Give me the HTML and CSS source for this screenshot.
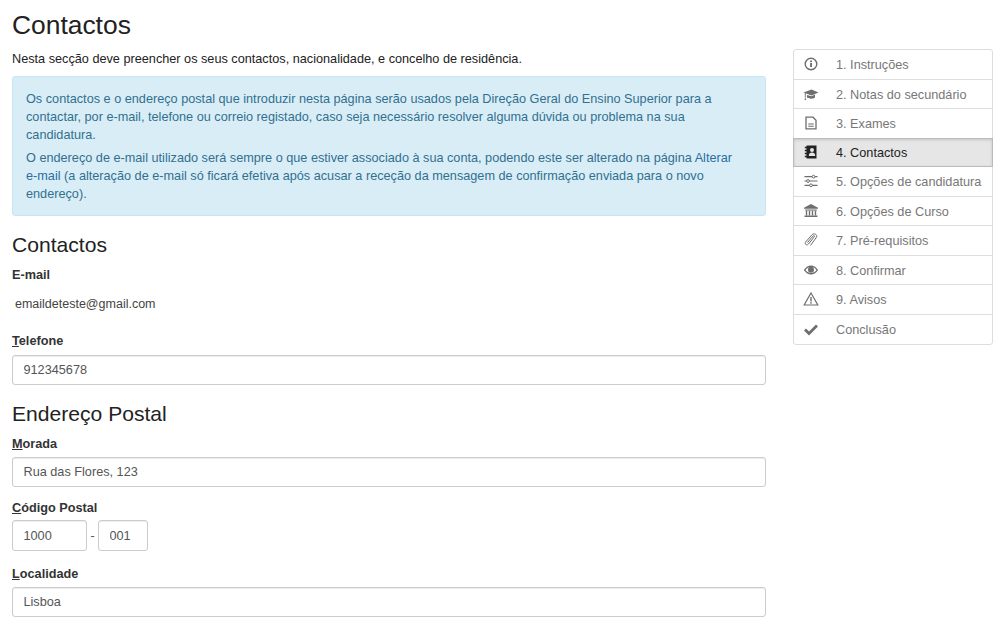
FILE: index.html
```html
<!DOCTYPE html>
<html lang="pt">
<head>
<meta charset="utf-8">
<title>Contactos</title>
<link rel="stylesheet" href="styles.css">
</head>
<body>
<div class="page">
  <main class="main">
    <h1 class="title">Contactos</h1>
    <p class="lead">Nesta secção deve preencher os seus contactos, nacionalidade, e concelho de residência.</p>
    <div class="alert">
      <p class="alert-p">Os contactos e o endereço postal que introduzir nesta página serão usados pela Direção Geral do Ensino Superior para a contactar, por e-mail, telefone ou correio registado, caso seja necessário resolver alguma dúvida ou problema na sua candidatura.</p>
      <p class="alert-p">O endereço de e-mail utilizado será sempre o que estiver associado à sua conta, podendo este ser alterado na página <a class="alert-link" href="#">Alterar <span class="nowrap">e-mail</span></a> (a alteração de e-mail só ficará efetiva após acusar a receção da mensagem de confirmação enviada para o novo endereço).</p>
    </div>
    <h2 class="section first">Contactos</h2>
    <div class="label email-label">E-mail</div>
    <div class="static">emaildeteste@gmail.com</div>
    <label class="label tel-label" for="tel"><u>T</u>elefone</label>
    <input class="field" id="tel" value="912345678">
    <h2 class="section second">Endereço Postal</h2>
    <label class="label mor-label" for="mor"><u>M</u>orada</label>
    <input class="field" id="mor" value="Rua das Flores, 123">
    <label class="label gap" for="cp"><u>C</u>ódigo Postal</label>
    <div class="postal">
      <input class="field cp4" id="cp" value="1000">
      <span class="dash">-</span>
      <input class="field cp3" value="001">
    </div>
    <label class="label gap2" for="loc"><u>L</u>ocalidade</label>
    <input class="field" id="loc" value="Lisboa">
  </main>
  <nav class="steps">
    <a class="step" href="#"><svg class="ico" viewBox="0 0 16 16"><circle cx="8" cy="8" r="5.8" fill="none" stroke="currentColor" stroke-width="1.4"/><rect x="7.1" y="7" width="1.9" height="4" fill="currentColor"/><rect x="7.1" y="4.5" width="1.9" height="1.6" fill="currentColor"/></svg><span>1. Instruções</span></a>
    <a class="step" href="#"><svg class="ico" viewBox="0 0 16 16"><path d="M0.5 6.5 8.5 3.5 15.5 6.5 8.5 9.5Z" fill="currentColor"/><path d="M4 9v2.5c2 1.6 6 1.6 8 0V8.5L8.5 10.3Z" fill="currentColor"/><path d="M2.3 7v4.5" stroke="currentColor" stroke-width=".9"/><path d="M1.5 14l.8-3 .8 3Z" fill="currentColor"/></svg><span>2. Notas do secundário</span></a>
    <a class="step" href="#"><svg class="ico" viewBox="0 0 16 16"><path d="M3 2.200h7l3 3v8.600H3Z" fill="none" stroke="currentColor" stroke-width="1.3"/><path d="M5.200 9h5.600M5.200 11.200h5.600" stroke="currentColor" stroke-width="1.1"/></svg><span>3. Exames</span></a>
    <a class="step active" href="#"><svg class="ico" viewBox="0 0 16 16"><path d="M3.500 1.500h10v13h-10Z" fill="currentColor"/><path d="M1.800 3.500h2.500M1.800 6.500h2.500M1.800 9.500h2.500M1.800 12.500h2.500" stroke="currentColor" stroke-width="1.4"/><circle cx="9" cy="6" r="2" fill="#e6e6e6"/><path d="M5.800 12c0-2.600 1.400-3.400 3.200-3.400s3.200.8 3.200 3.400Z" fill="#e6e6e6"/></svg><span>4. Contactos</span></a>
    <a class="step" href="#"><svg class="ico" viewBox="0 0 16 16"><path d="M1.500 3.700h13M1.500 8h13M1.500 12.300h13" stroke="currentColor" stroke-width="1.2"/><circle cx="10.500" cy="3.700" r="1.400" fill="#fff" stroke="currentColor"/><circle cx="5" cy="8" r="1.400" fill="#fff" stroke="currentColor"/><circle cx="8" cy="12.300" r="1.400" fill="#fff" stroke="currentColor"/></svg><span>5. Opções de candidatura</span></a>
    <a class="step" href="#"><svg class="ico" viewBox="0 0 16 16"><path d="M8 1 15 4.700v1H1v-1Z" fill="currentColor"/><path d="M2.200 6.500h11.600v1H2.200ZM1.500 12.500h13V14h-13Z" fill="currentColor"/><path d="M3.500 7.500v5M6.500 7.500v5M9.500 7.500v5M12.500 7.500v5" stroke="currentColor" stroke-width="1.4"/></svg><span>6. Opções de Curso</span></a>
    <a class="step" href="#"><svg class="ico" viewBox="0 0 16 16"><path d="M4.500 10.500 10 4c.8-.9 2-.2 1.300.8L5.500 12c-1.500 1.800-4 .5-3-1.800L9 2.700C10.800.8 14.800 2.500 13.600 5L7.500 13.500" fill="none" stroke="currentColor" stroke-width="1"/></svg><span>7. Pré-requisitos</span></a>
    <a class="step" href="#"><svg class="ico" viewBox="0 0 16 16"><path d="M.8 8C3 4.700 5.500 3.400 8 3.400s5 1.300 7.200 4.600C13 11.300 10.500 12.600 8 12.600S3 11.300.8 8Z" fill="currentColor"/><path d="M2.500 8C4.200 10.200 6 11 8 11s3.800-.8 5.500-3C11.800 5.600 10 5 8 5S4.200 5.800 2.500 8Z" fill="#fff"/><circle cx="8" cy="7.700" r="3" fill="currentColor"/></svg><span>8. Confirmar</span></a>
    <a class="step" href="#"><svg class="ico" viewBox="0 0 16 16"><path d="M8 2 14.800 14H1.200Z" fill="none" stroke="currentColor" stroke-width="1.200"/><path d="M8 6v4.500M8 11.300v1.500" stroke="currentColor" stroke-width="1.400"/></svg><span>9. Avisos</span></a>
    <a class="step" href="#"><svg class="ico" viewBox="0 0 16 16"><path d="M2 8.500 6 12.500 14 4.500" fill="none" stroke="currentColor" stroke-width="2.800"/></svg><span>Conclusão</span></a>
  </nav>
</div>
</body>
</html>
```
FILE: styles.css
```css
* { box-sizing: border-box; }
html, body { margin: 0; padding: 0; background: #fff; }
body {
  font-family: "Liberation Sans", Arial, sans-serif;
  font-size: 12.7px;
  line-height: 18px;
  color: #333;
  height: 629px;
  overflow: hidden;
}
.page { display: flex; align-items: flex-start; padding-left: 12px; }
.main { width: 754px; flex: none; }
.title {
  margin: 0;
  padding-top: 9px;
  font-size: 26.4px;
  line-height: 32px;
  font-weight: 500;
  color: #222;
}
.lead { margin: 9px 0 0; color: #222; }
.alert {
  margin-top: 8px;
  height: 140px;
  padding: 13px 13px 0;
  background: #d9edf7;
  border: 1px solid #c6e6f3;
  border-radius: 3px;
  color: #31708f;
}
.alert-p { margin: 0 0 5px; }
.alert-link { color: #2a6f9e; text-decoration: none; }
.nowrap { white-space: nowrap; }
.section { margin: 0; font-weight: 500; color: #222; font-size: 21.1px; line-height: 26px; }
.section.first { margin-top: 16px; }
.section.second { margin-top: 16px; }
.label { display: block; font-weight: 700; color: #333; }
.email-label { margin-top: 8px; }
.static { margin-top: 11px; padding-left: 3px; color: #444; font-size: 12.5px; }
.tel-label { margin-top: 19px; }
.mor-label { margin-top: 8px; }
.field {
  display: block;
  width: 100%;
  height: 30px;
  margin: 0;
  padding: 0 10.5px;
  border: 1px solid #ccc;
  border-radius: 3px;
  background: #fff;
  box-shadow: inset 0 1px 1px rgba(0,0,0,.075);
  font: 12.7px "Liberation Sans", Arial, sans-serif;
  color: #555;
  outline: 0;
}
.label + .field { margin-top: 4px; }
.tel-label + .field { margin-top: 5px; }
.gap { margin-top: 12px; }
.gap2 { margin-top: 14px; }
.postal { display: flex; align-items: center; margin-top: 3px; }
.cp4 { width: 75px; height: 31px; }
.cp3 { width: 50px; height: 31px; }
.dash { width: 11px; text-align: center; color: #555; }
.steps {
  width: 200px;
  flex: none;
  margin: 49px 0 0 27px;
  border: 1px solid #ddd;
  border-radius: 3px;
  background: #fff;
}
.step {
  display: flex;
  align-items: center;
  height: 29.5px;
  padding-left: 9px;
  border-bottom: 1px solid #ddd;
  color: #777;
  text-decoration: none;
}
.step:last-child { border-bottom: 0; }
.step span { margin-left: 17px; padding-top: 2px; }
.ico { width: 16px; height: 16px; flex: none; color: #6e6e6e; }
.step.active {
  background: #e6e6e6;
  border: 1px solid #bbb;
  margin: -1px -1px 0;
  padding-left: 9px;
  color: #222;
  box-shadow: inset 0 1px 3px rgba(0,0,0,.15);
}
.step.active .ico { color: #222; }
```
